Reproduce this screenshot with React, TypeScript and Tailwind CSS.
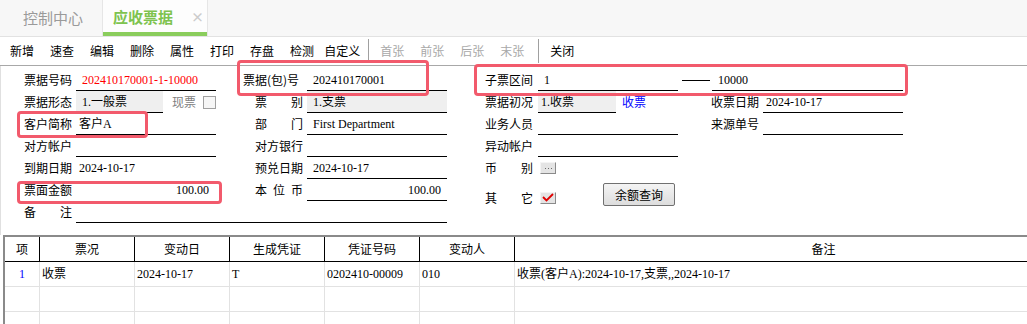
import React from "react";

const CJK = "font-['Noto_Sans_CJK_SC',sans-serif]";
const VAL = "font-['Liberation_Serif','Noto_Sans_CJK_SC',serif]";

function Label({ text, spaced, wide }: { text: string; spaced?: boolean; wide?: boolean }) {
  if (spaced) {
    return (
      <div className="w-[48px] shrink-0 flex justify-between whitespace-nowrap">
        {text.split(" ").map((c, i) => (
          <span key={i}>{c}</span>
        ))}
      </div>
    );
  }
  return <div className={wide ? "w-[60px] shrink-0 whitespace-nowrap" : "w-[48px] shrink-0 whitespace-nowrap"}>{text}</div>;
}

function Row({ children, className }: { children?: React.ReactNode; className?: string }) {
  return <div className={"h-[22px] flex items-center text-[12px] text-black " + (className || "")}>{children}</div>;
}

function Field({ children, className, noLine }: { children?: React.ReactNode; className?: string; noLine?: boolean }) {
  return (
    <div
      className={
        "h-full flex items-center shrink-0 whitespace-nowrap " +
        (noLine ? "" : "border-b border-black ") +
        VAL +
        " " +
        (className || "")
      }
    >
      {children}
    </div>
  );
}

function MiniBtn({ children }: { children?: React.ReactNode }) {
  return (
    <div className="w-[16px] h-[12px] border border-t-[#f4f4f4] border-l-[#f4f4f4] border-r-[#8a8a8a] border-b-[#8a8a8a] bg-[#e4e4e4] flex items-center justify-center shrink-0">
      {children}
    </div>
  );
}

const tools1 = ["新增", "速查", "编辑", "删除", "属性", "打印", "存盘", "检测"];
const tools2 = ["首张", "前张", "后张", "末张"];

const cols = [
  { t: "项", w: "w-[35px]" },
  { t: "票况", w: "w-[95px]" },
  { t: "变动日", w: "w-[95px]" },
  { t: "生成凭证", w: "w-[95px]" },
  { t: "凭证号码", w: "w-[95px]" },
  { t: "变动人", w: "w-[95px]" },
  { t: "备注", w: "w-[618px]" },
];

const rowData = ["1", "收票", "2024-10-17", "T", "0202410-00009", "010", "收票(客户A):2024-10-17,支票,,2024-10-17"];

export default function App() {
  return (
    <div className={"relative w-[1027px] h-[324px] overflow-hidden bg-white " + CJK}>
      {/* Tab bar */}
      <div className="h-[37px] bg-[#f7f7f7] border-b border-[#e2e2e2] flex">
        <div className="w-[103px] h-full flex items-center pl-[23px] text-[15px] text-[#9a9a9a] border-r border-[#e6e6e6]">
          控制中心
        </div>
        <div className="relative w-[105px] h-full bg-[#fdfdfd] border-r border-[#e6e6e6] flex items-center">
          <span className="ml-[10px] pb-[2px] text-[15px] font-bold text-[#7ec34f]">应收票据</span>
          <span className="ml-[18px] pb-[3px] text-[13px] font-bold text-[#cccccc]">×</span>
          <div className="absolute left-0 right-0 bottom-[0px] h-[4px] bg-[#8acd5c]" />
        </div>
      </div>

      {/* Toolbar */}
      <div className="h-[29px] border-b border-[#a8a8a8] flex items-center text-[12px] text-black pl-[10px]">
        {tools1.map((t, i) => (
          <span key={t} className={i === 0 ? "" : "ml-[16px]"}>
            {t}
          </span>
        ))}
        <span className="ml-[10px]">自定义</span>
        <div className="ml-[8px] w-px h-[24px] bg-[#a0a0a0]" />
        {tools2.map((t, i) => (
          <span key={t} className={(i === 0 ? "ml-[11px]" : "ml-[16px]") + " text-[#a8a8a8]"}>
            {t}
          </span>
        ))}
        <div className="ml-[14px] w-px h-[24px] bg-[#a0a0a0]" />
        <span className="ml-[11px]">关闭</span>
      </div>

      {/* Form */}
      <div className="h-[169px] pt-[3px] pl-[23px] flex border-l border-[#e0e0e0]">
        {/* Column A */}
        <div className="w-[192px] flex flex-col shrink-0">
          <Row>
            <Label text="票据号码" />
            <Field className="ml-[4px] w-[140px] pl-[6px] text-[#ff0000]">202410170001-1-10000</Field>
          </Row>
          <Row>
            <Label text="票据形态" />
            <Field className="ml-[4px] w-[87px] pl-[6px] bg-[#efefef]">1.一般票</Field>
            <span className="ml-[9px] text-[#808080]">现票</span>
            <div className="ml-[7px] w-[13px] h-[13px] border border-[#a0a0a0] bg-[#f6f6f6]" />
          </Row>
          <Row>
            <Label text="客户简称" />
            <Field className="ml-[4px] w-[140px] pl-[3px]">客户A</Field>
          </Row>
          <Row>
            <Label text="对方帐户" />
            <Field className="ml-[4px] w-[140px]" />
          </Row>
          <Row>
            <Label text="到期日期" />
            <Field noLine className="ml-[4px] w-[140px] pl-[3px]">2024-10-17</Field>
          </Row>
          <Row>
            <Label text="票面金额" />
            <Field noLine className="ml-[4px] w-[140px] pr-[7px] justify-end">100.00</Field>
          </Row>
          <Row>
            <Label text="备 注" spaced />
            <Field className="ml-[4px] w-[371px]" />
          </Row>
        </div>

        {/* Column B */}
        <div className="ml-[27px] w-[204px] flex flex-col shrink-0">
          <Row>
            <Label text="票据(包)号" wide />
            <Field className="ml-[4px] w-[140px] pl-[6px]">202410170001</Field>
          </Row>
          <Row>
            <div className="w-[60px] flex justify-end shrink-0">
              <Label text="票 别" spaced />
            </div>
            <Field className="ml-[4px] w-[140px] pl-[6px] bg-[#efefef]">1.支票</Field>
          </Row>
          <Row>
            <div className="w-[60px] flex justify-end shrink-0">
              <Label text="部 门" spaced />
            </div>
            <Field className="ml-[4px] w-[140px] pl-[6px]">First Department</Field>
          </Row>
          <Row>
            <div className="w-[60px] flex justify-end shrink-0">
              <Label text="对方银行" />
            </div>
            <Field className="ml-[4px] w-[140px]" />
          </Row>
          <Row>
            <div className="w-[60px] flex justify-end shrink-0">
              <Label text="预兑日期" />
            </div>
            <Field className="ml-[4px] w-[140px] pl-[6px]">2024-10-17</Field>
          </Row>
          <Row>
            <div className="w-[60px] flex justify-end shrink-0">
              <Label text="本 位 币" spaced />
            </div>
            <Field className="ml-[4px] w-[140px] pr-[6px] justify-end">100.00</Field>
          </Row>
        </div>

        {/* Column C + D */}
        <div className="ml-[38px] flex flex-col shrink-0">
          <Row>
            <Label text="子票区间" />
            <Field className="ml-[5px] w-[140px] pl-[6px]">1</Field>
            <div className="ml-[4px] w-[28px] h-px bg-black shrink-0" />
            <Field className="ml-[2px] w-[191px] pl-[6px]">10000</Field>
          </Row>
          <Row>
            <div className="w-[226px] h-full flex items-center shrink-0">
              <Label text="票据初况" />
              <Field className="ml-[5px] w-[78px] pl-[3px] bg-[#efefef]">1.收票</Field>
              <span className="ml-[6px] text-[#0000ff]">收票</span>
            </div>
            <Label text="收票日期" />
            <Field className="ml-[4px] w-[140px] pl-[3px]">2024-10-17</Field>
          </Row>
          <Row>
            <div className="w-[226px] h-full flex items-center shrink-0">
              <Label text="业务人员" />
              <Field className="ml-[5px] w-[140px]" />
            </div>
            <Label text="来源单号" />
            <Field className="ml-[4px] w-[140px]" />
          </Row>
          <Row>
            <Label text="异动帐户" />
            <Field className="ml-[5px] w-[140px]" />
          </Row>
          <Row>
            <Label text="币 别" spaced />
            <div className="ml-[7px]">
              <MiniBtn>
                <div className="flex gap-[2px]">
                  <div className="w-[1px] h-[1px] bg-[#6a6a6a]" />
                  <div className="w-[1px] h-[1px] bg-[#6a6a6a]" />
                  <div className="w-[1px] h-[1px] bg-[#6a6a6a]" />
                </div>
              </MiniBtn>
            </div>
          </Row>
          <div className="h-[36px] flex items-center text-[12px] text-black">
            <div className="mt-[1px] flex items-center">
              <Label text="其 它" spaced />
              <div className="ml-[7px]">
                <MiniBtn>
                  <svg width="12" height="9" viewBox="0 0 12 9">
                    <polyline points="1,4 4.5,7.5 11,1" fill="none" stroke="#e00000" strokeWidth="1.8" />
                  </svg>
                </MiniBtn>
              </div>
            </div>
            <div className="self-start mt-[4px] ml-[47px] w-[72px] h-[23px] rounded-[2px] border border-[#707070] bg-gradient-to-b from-[#f4f4f4] to-[#dddddd] flex items-center justify-center text-[12px] text-black">
              余额查询
            </div>
          </div>
        </div>
      </div>

      {/* Grid */}
      <div className="ml-[3px] border-t-2 border-l-2 border-[#8a8a8a] h-[89px] overflow-hidden">
        <div className="flex h-[25px] border-b border-black bg-white">
          {cols.map((c) => (
            <div key={c.t} className={c.w + " shrink-0 border-r border-black flex items-center justify-center text-[12px] text-black"}>
              {c.t}
            </div>
          ))}
        </div>
        {[0, 1, 2].map((r) => (
          <div key={r} className="flex h-[25px] border-b border-[#e2e2e2]">
            {cols.map((c, i) => (
              <div
                key={c.t}
                className={
                  c.w +
                  " shrink-0 border-r border-[#e2e2e2] flex items-center text-[12px] whitespace-nowrap " +
                  VAL +
                  (i === 0 ? " justify-center text-[#0000ff]" : " pl-[2px] text-black")
                }
              >
                {r === 0 ? rowData[i] : ""}
              </div>
            ))}
          </div>
        ))}
      </div>

      {/* Red annotation boxes */}
      <div className="absolute left-[237px] top-[60px] w-[192px] h-[36px] border-[3px] border-[#f25a6c] rounded-[4px] pointer-events-none" />
      <div className="absolute left-[474px] top-[64px] w-[434px] h-[32px] border-[3px] border-[#f25a6c] rounded-[4px] pointer-events-none" />
      <div className="absolute left-[17px] top-[111px] w-[131px] h-[27px] border-[3px] border-[#f25a6c] rounded-[4px] pointer-events-none" />
      <div className="absolute left-[17px] top-[181px] w-[205px] h-[23px] border-[3px] border-[#f25a6c] rounded-[4px] pointer-events-none" />
    </div>
  );
}
